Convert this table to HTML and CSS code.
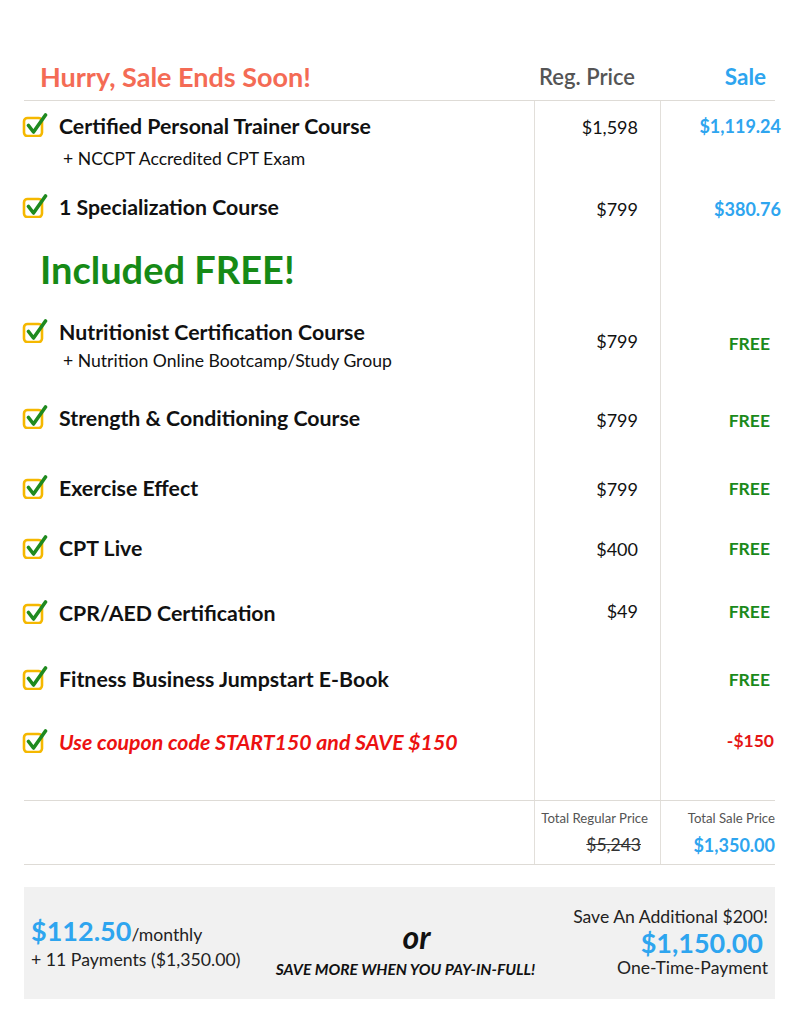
FILE: index.html
```html
<!DOCTYPE html>
<html>
<head>
<meta charset="utf-8">
<link rel="stylesheet" href="styles.css">
</head>
<body>
<div class="page">
  <div class="table">
    <div class="row head">
      <div class="c1"><span class="hurry">Hurry, Sale Ends Soon!</span></div>
      <div class="c2 hreg">Reg. Price</div>
      <div class="c3 hsale">Sale</div>
    </div>

    <div class="row h81">
      <div class="c1 item">
        <svg class="chk" viewBox="0 0 26 26"><rect x="2" y="7" width="18" height="18" rx="3.5" fill="#fff" stroke="#f5b800" stroke-width="2.6"/><path d="M6.5 14.5 L11.5 21 L23.5 4" fill="none" stroke="#1f8a1f" stroke-width="3.6" stroke-linecap="round" stroke-linejoin="round"/></svg>
        <div><div class="title">Certified Personal Trainer Course</div><div class="sub s1">+ NCCPT Accredited CPT Exam</div></div>
      </div>
      <div class="c2 reg">$1,598</div>
      <div class="c3 sale"><span class="blue">$1,119.24</span></div>
    </div>

    <div class="row h50">
      <div class="c1 item">
        <svg class="chk" viewBox="0 0 26 26"><rect x="2" y="7" width="18" height="18" rx="3.5" fill="#fff" stroke="#f5b800" stroke-width="2.6"/><path d="M6.5 14.5 L11.5 21 L23.5 4" fill="none" stroke="#1f8a1f" stroke-width="3.6" stroke-linecap="round" stroke-linejoin="round"/></svg>
        <div class="title">1 Specialization Course</div>
      </div>
      <div class="c2 reg low">$799</div>
      <div class="c3 sale low"><span class="blue">$380.76</span></div>
    </div>

    <div class="row h75">
      <div class="c1 incl">Included FREE!</div>
      <div class="c2"></div>
      <div class="c3"></div>
    </div>

    <div class="row h86">
      <div class="c1 item">
        <svg class="chk" viewBox="0 0 26 26"><rect x="2" y="7" width="18" height="18" rx="3.5" fill="#fff" stroke="#f5b800" stroke-width="2.6"/><path d="M6.5 14.5 L11.5 21 L23.5 4" fill="none" stroke="#1f8a1f" stroke-width="3.6" stroke-linecap="round" stroke-linejoin="round"/></svg>
        <div><div class="title">Nutritionist Certification Course</div><div class="sub s2">+ Nutrition Online Bootcamp/Study Group</div></div>
      </div>
      <div class="c2 reg mid">$799</div>
      <div class="c3 sale mid2"><span class="free">FREE</span></div>
    </div>

    <div class="row h70">
      <div class="c1 item">
        <svg class="chk" viewBox="0 0 26 26"><rect x="2" y="7" width="18" height="18" rx="3.5" fill="#fff" stroke="#f5b800" stroke-width="2.6"/><path d="M6.5 14.5 L11.5 21 L23.5 4" fill="none" stroke="#1f8a1f" stroke-width="3.6" stroke-linecap="round" stroke-linejoin="round"/></svg>
        <div class="title">Strength &amp; Conditioning Course</div>
      </div>
      <div class="c2 reg low">$799</div>
      <div class="c3 sale low"><span class="free">FREE</span></div>
    </div>

    <div class="row h60">
      <div class="c1 item">
        <svg class="chk" viewBox="0 0 26 26"><rect x="2" y="7" width="18" height="18" rx="3.5" fill="#fff" stroke="#f5b800" stroke-width="2.6"/><path d="M6.5 14.5 L11.5 21 L23.5 4" fill="none" stroke="#1f8a1f" stroke-width="3.6" stroke-linecap="round" stroke-linejoin="round"/></svg>
        <div class="title">Exercise Effect</div>
      </div>
      <div class="c2 reg">$799</div>
      <div class="c3 sale"><span class="free">FREE</span></div>
    </div>

    <div class="row h65">
      <div class="c1 item">
        <svg class="chk" viewBox="0 0 26 26"><rect x="2" y="7" width="18" height="18" rx="3.5" fill="#fff" stroke="#f5b800" stroke-width="2.6"/><path d="M6.5 14.5 L11.5 21 L23.5 4" fill="none" stroke="#1f8a1f" stroke-width="3.6" stroke-linecap="round" stroke-linejoin="round"/></svg>
        <div class="title">CPT Live</div>
      </div>
      <div class="c2 reg">$400</div>
      <div class="c3 sale"><span class="free">FREE</span></div>
    </div>

    <div class="row h66">
      <div class="c1 item">
        <svg class="chk" viewBox="0 0 26 26"><rect x="2" y="7" width="18" height="18" rx="3.5" fill="#fff" stroke="#f5b800" stroke-width="2.6"/><path d="M6.5 14.5 L11.5 21 L23.5 4" fill="none" stroke="#1f8a1f" stroke-width="3.6" stroke-linecap="round" stroke-linejoin="round"/></svg>
        <div class="title">CPR/AED Certification</div>
      </div>
      <div class="c2 reg up">$49</div>
      <div class="c3 sale up"><span class="free">FREE</span></div>
    </div>

    <div class="row h63">
      <div class="c1 item">
        <svg class="chk" viewBox="0 0 26 26"><rect x="2" y="7" width="18" height="18" rx="3.5" fill="#fff" stroke="#f5b800" stroke-width="2.6"/><path d="M6.5 14.5 L11.5 21 L23.5 4" fill="none" stroke="#1f8a1f" stroke-width="3.6" stroke-linecap="round" stroke-linejoin="round"/></svg>
        <div class="title">Fitness Business Jumpstart E-Book</div>
      </div>
      <div class="c2 reg"></div>
      <div class="c3 sale"><span class="free">FREE</span></div>
    </div>

    <div class="row h83">
      <div class="c1 item">
        <svg class="chk" viewBox="0 0 26 26"><rect x="2" y="7" width="18" height="18" rx="3.5" fill="#fff" stroke="#f5b800" stroke-width="2.6"/><path d="M6.5 14.5 L11.5 21 L23.5 4" fill="none" stroke="#1f8a1f" stroke-width="3.6" stroke-linecap="round" stroke-linejoin="round"/></svg>
        <div class="title coupon">Use coupon code START150 and SAVE $150</div>
      </div>
      <div class="c2 reg"></div>
      <div class="c3 sale up"><span class="minus">-$150</span></div>
    </div>

    <div class="row totals">
      <div class="c1"></div>
      <div class="c2 treg">
        <div class="tlabel">Total Regular Price</div>
        <div class="tval strike">$5,243</div>
      </div>
      <div class="c3 tsale">
        <div class="tlabel">Total Sale Price</div>
        <div class="tval blue">$1,350.00</div>
      </div>
    </div>
  </div>

  <div class="paybox">
    <div class="monthly">
      <div class="mline"><span class="mprice">$112.50</span><span class="mper">/monthly</span></div>
      <div class="msub">+ 11 Payments ($1,350.00)</div>
    </div>
    <div class="or-block">
      <div class="or">or</div>
      <div class="savemore">SAVE MORE WHEN YOU PAY-IN-FULL!</div>
    </div>
    <div class="full">
      <div class="fsave">Save An Additional $200!</div>
      <div class="fprice">$1,150.00</div>
      <div class="fsub">One-Time-Payment</div>
    </div>
  </div>
</div>
</body>
</html>
```

FILE: styles.css
```css
* { box-sizing: border-box; }
body {
  margin: 0;
  background: #fff;
  font-family: Lato, "Liberation Sans", sans-serif;
  color: #111;
}
.page {
  padding: 60px 25px 0 24px;
  width: 800px;
}
.table { width: 751px; }
.row {
  display: grid;
  grid-template-columns: 510px 126px 115px;
}
.row > .c2, .row > .c3 { border-left: 1px solid #e2dfda; }
.row.head > .c2, .row.head > .c3 { border-left: none; }
.head {
  height: 41px;
  align-items: end;
  border-bottom: 1px solid #dedbd6;
  padding-bottom: 8px;
}
.hurry {
  display: block;
  padding-left: 16px;
  font-size: 27px;
  line-height: 30px;
  font-weight: 700;
  color: #f46b55;
}
.hreg {
  text-align: right;
  padding-right: 25px;
  font-size: 22px;
  line-height: 30px;
  font-weight: 600;
  color: #555;
}
.hsale {
  text-align: right;
  padding-right: 9px;
  font-size: 22.5px;
  line-height: 30px;
  font-weight: 700;
  color: #2ea5ef;
}
.h81 { height: 81px; }
.h50 { height: 50px; }
.h75 { height: 75px; }
.h86 { height: 86px; }
.h70 { height: 70px; }
.h60 { height: 60px; }
.h65 { height: 65px; }
.h66 { height: 66px; }
.h63 { height: 63px; }
.h83 { height: 83px; }

.item {
  display: flex;
  align-items: flex-start;
  gap: 11px;
  padding-top: 13px;
}
.chk {
  width: 26px;
  height: 26px;
  margin-left: -2px;
  margin-top: -3px;
  flex: none;
}
.title {
  font-size: 21.3px;
  line-height: 24px;
  font-weight: 700;
  color: #111;
}
.coupon {
  color: #ec1111;
  font-style: italic;
}
.sub {
  font-size: 17.6px;
  line-height: 20px;
  color: #111;
  padding-left: 4px;
}
.s1 { margin-top: 11px; }
.s2 { margin-top: 7px; }

.incl {
  padding-top: 15px;
  padding-left: 16px;
  font-size: 38px;
  line-height: 44px;
  font-weight: 700;
  color: #168a16;
}

.reg {
  text-align: right;
  padding-right: 22px;
  padding-top: 14px;
  font-size: 18px;
  line-height: 24px;
  color: #111;
}
.sale {
  text-align: right;
  padding-top: 13px;
  font-size: 18px;
  line-height: 24px;
  font-weight: 700;
}
.reg.low, .sale.low { padding-top: 15px; }
.reg.mid { padding-top: 22px; }
.sale.mid2 { padding-top: 24px; }
.reg.up, .sale.up { padding-top: 11px; }
.blue { color: #2ea5ef; display: inline-block; margin-right: -6px; }
.free {
  color: #1b8a1b;
  font-size: 17.5px;
  display: inline-block;
  padding-right: 5px;
}
.minus {
  color: #e51515;
  font-size: 17.5px;
  display: inline-block;
  padding-right: 1px;
}

.totals {
  height: 65px;
  border-top: 1px solid #dedbd6;
  border-bottom: 1px solid #dedbd6;
}
.treg, .tsale {
  text-align: right;
  padding-top: 9px;
}
.treg { padding-right: 12px; }
.tsale { padding-right: 0; }
.tlabel {
  font-size: 13.2px;
  line-height: 16px;
  color: #555;
}
.tval {
  margin-top: 8px;
  font-size: 18px;
  line-height: 22px;
}
.tval.blue { font-weight: 700; margin-right: 0; display: block; }
.strike {
  text-decoration: line-through;
  color: #333;
  font-size: 17.5px;
  padding-right: 7px;
}

.paybox {
  margin-top: 22px;
  width: 751px;
  height: 112px;
  background: #f1f1f1;
  display: grid;
  grid-template-columns: 1fr auto 1fr;
  align-items: center;
  padding: 0 7px;
}
.mline { line-height: 30px; }
.mprice {
  font-size: 27px;
  font-weight: 700;
  color: #2ea5ef;
}
.mper {
  font-size: 17.6px;
  color: #222;
}
.msub {
  font-size: 17.7px;
  line-height: 20px;
  color: #222;
}
.or-block {
  text-align: center;
  padding-top: 10px;
  margin-left: 12px;
}
.or {
  font-size: 32px;
  line-height: 36px;
  font-weight: 700;
  font-style: italic;
  color: #111;
  padding-left: 22px;
}
.savemore {
  margin-top: 5px;
  font-size: 15.6px;
  line-height: 18px;
  font-weight: 700;
  font-style: italic;
  color: #111;
}
.full {
  text-align: right;
  margin-top: -2px;
}
.fsave {
  font-size: 17.6px;
  line-height: 22px;
  color: #222;
}
.fprice {
  font-size: 27px;
  line-height: 30px;
  font-weight: 700;
  color: #2ea5ef;
  padding-right: 5px;
}
.fsub {
  font-size: 17.6px;
  line-height: 20px;
  color: #222;
}
```
